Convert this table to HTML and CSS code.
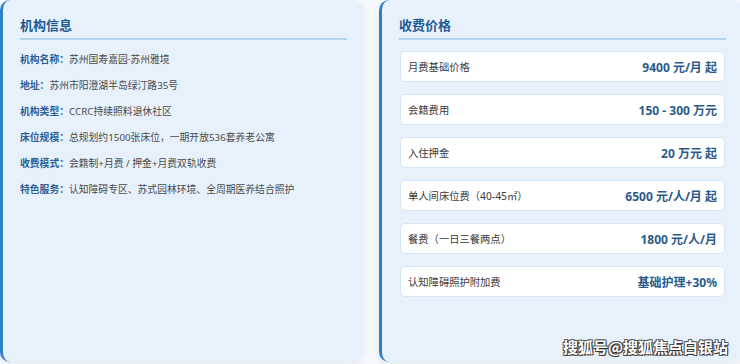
FILE: index.html
```html
<!DOCTYPE html>
<html lang="zh-CN">
<head>
<meta charset="utf-8">
<title>机构信息 · 收费价格</title>
<link rel="stylesheet" href="styles.css">
</head>
<body>
<div class="page">
  <section class="card">
    <h2 class="card-title">机构信息</h2>
    <ul class="info-list">
      <li><span class="info-label">机构名称：</span>苏州国寿嘉园·苏州雅境</li>
      <li><span class="info-label">地址：</span>苏州市阳澄湖半岛绿汀路35号</li>
      <li><span class="info-label">机构类型：</span>CCRC持续照料退休社区</li>
      <li><span class="info-label">床位规模：</span>总规划约1500张床位，一期开放536套养老公寓</li>
      <li><span class="info-label">收费模式：</span>会籍制+月费 / 押金+月费双轨收费</li>
      <li><span class="info-label">特色服务：</span>认知障碍专区、苏式园林环境、全周期医养结合照护</li>
    </ul>
  </section>
  <section class="card">
    <h2 class="card-title">收费价格</h2>
    <div class="price-list">
      <div class="price-row"><span class="price-label">月费基础价格</span><span class="price-value">9400 元/月 起</span></div>
      <div class="price-row"><span class="price-label">会籍费用</span><span class="price-value">150 - 300 万元</span></div>
      <div class="price-row"><span class="price-label">入住押金</span><span class="price-value">20 万元 起</span></div>
      <div class="price-row"><span class="price-label">单人间床位费（40-45㎡）</span><span class="price-value">6500 元/人/月 起</span></div>
      <div class="price-row"><span class="price-label">餐费（一日三餐两点）</span><span class="price-value">1800 元/人/月</span></div>
      <div class="price-row"><span class="price-label">认知障碍照护附加费</span><span class="price-value">基础护理+30%</span></div>
    </div>
  </section>
  <div class="watermark">搜狐号@搜狐焦点白银站</div>
</div>
</body>
</html>
```

FILE: styles.css
```css
* { box-sizing: border-box; }
html, body {
  margin: 0;
  padding: 0;
  background: #f7fafd;
  font-family: "Noto Sans", "Noto Sans CJK SC", sans-serif;
  overflow: hidden;
}
.page {
  position: relative;
  width: 742px;
  height: 364px;
  display: grid;
  grid-template-columns: 363px 363px;
  column-gap: 16px;
  align-items: start;
}
.card {
  height: 362px;
  background: #e7f1fb;
  border-left: 3px solid #2f7fc8;
  border-radius: 10px;
  padding: 14px 16px 0 17px;
  box-shadow: 0 2px 8px rgba(40, 80, 130, 0.10);
}
.card-title {
  margin: 0;
  font-size: 13px;
  line-height: 20px;
  font-weight: 700;
  color: #1f5a95;
  padding: 1px 0 3px;
  border-bottom: 2px solid #b3d3ef;
}
.info-list {
  list-style: none;
  margin: 7px 0 0;
  padding: 0;
}
.info-list li {
  font-size: 9.8px;
  line-height: 25.9px;
  color: #4a4a4a;
  white-space: nowrap;
}
.info-label {
  font-weight: 700;
  color: #2b5f95;
}
.price-list {
  margin-top: 11px;
  display: flex;
  flex-direction: column;
  gap: 12px;
  padding-left: 1px;
  padding-right: 1px;
}
.price-row {
  height: 31px;
  display: flex;
  align-items: center;
  justify-content: space-between;
  background: #ffffff;
  border: 1px solid #d5e6f6;
  border-radius: 5px;
  padding: 0 7px;
}
.price-label {
  font-size: 10.3px;
  color: #3a3a3a;
}
.price-value {
  font-size: 12px;
  font-weight: 700;
  color: #2b5a8a;
}
.watermark {
  position: absolute;
  left: 563px;
  top: 336px;
  font-family: "Noto Sans CJK SC", sans-serif;
  font-size: 15px;
  line-height: 22px;
  font-weight: 700;
  color: #ffffff;
  white-space: nowrap;
  text-shadow: 1px 1px 0 #333, -1px -1px 0 #555, 1px -1px 0 #555, -1px 1px 0 #555;
}
```
